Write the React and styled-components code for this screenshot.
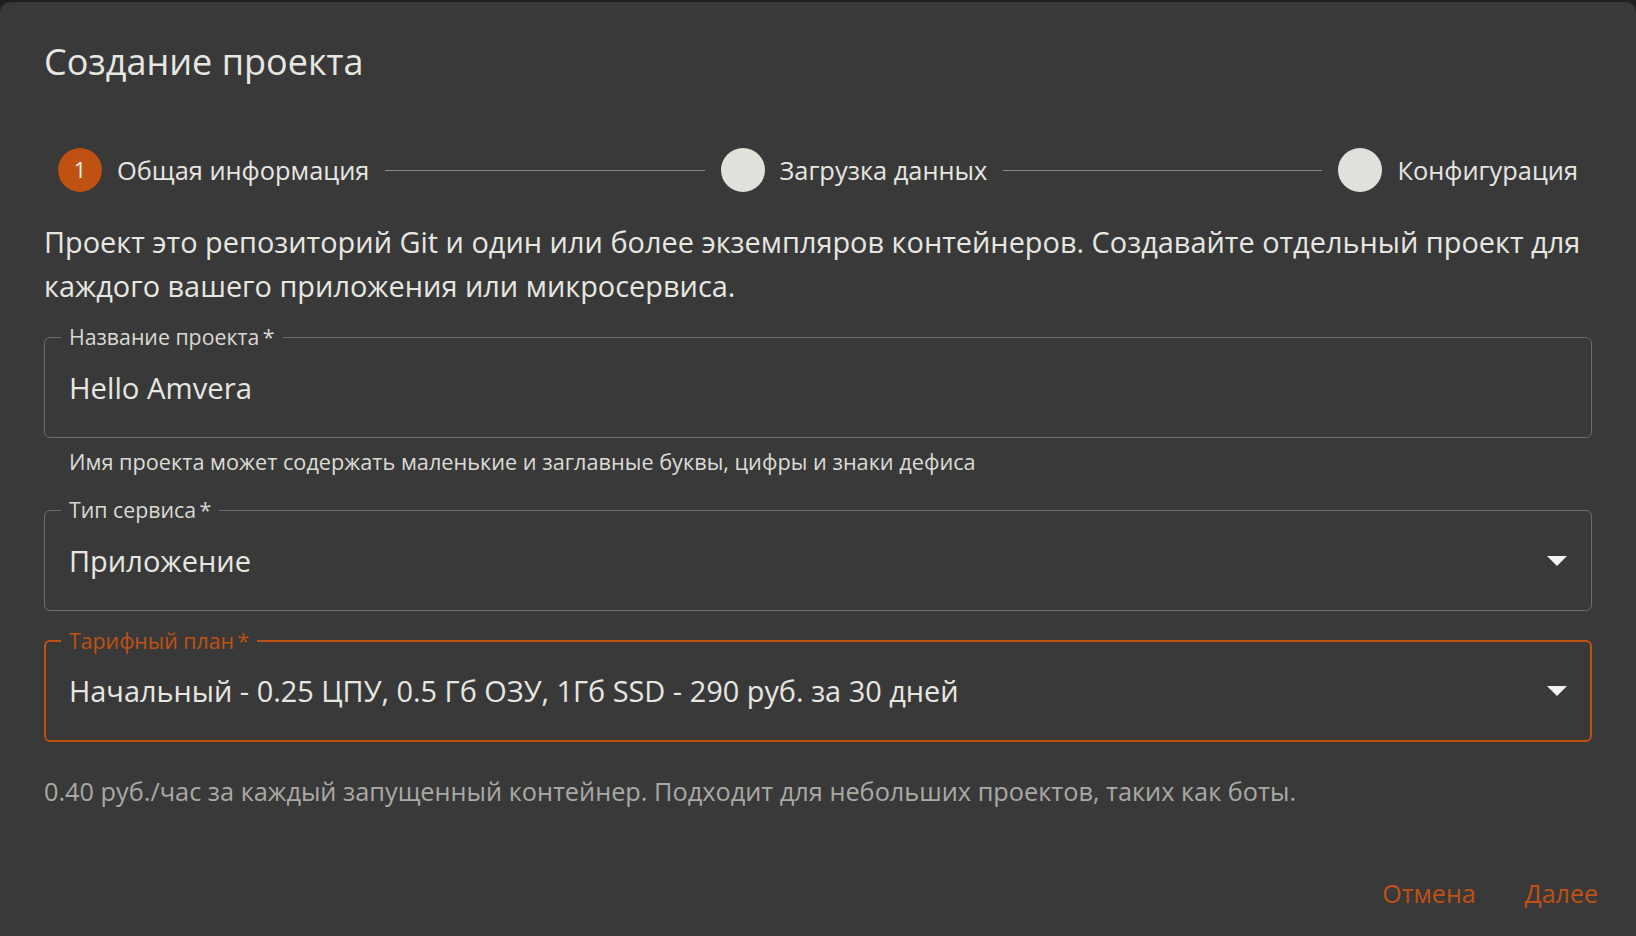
import React from "react";
import styled, { createGlobalStyle } from "styled-components";

const GlobalStyle = createGlobalStyle`
  html, body {
    margin: 0;
    padding: 0;
    background: #1f1f1f;
    font-family: "Open Sans", "Noto Sans", sans-serif;
  }
  * { box-sizing: border-box; }
`;

const ORANGE = "#bf5213";
const TEXT = "#e7e7e1";

const Dialog = styled.div`
  margin-top: 2px;
  height: 934px;
  background: #393939;
  border-radius: 10px 10px 0 0;
  color: ${TEXT};
  display: flex;
  flex-direction: column;
`;

const Content = styled.div`
  padding: 33px 44px 0 44px;
  display: flex;
  flex-direction: column;
`;

const Title = styled.h2`
  margin: 0;
  font-size: 36px;
  line-height: 54px;
  font-weight: 400;
`;

const Stepper = styled.div`
  margin-top: 59px;
  padding: 0 14px;
  display: flex;
  align-items: center;
  height: 44px;
`;

const Step = styled.div`
  display: flex;
  align-items: center;
  gap: 15px;
  flex-shrink: 0;
`;

const StepCircle = styled.div`
  width: 44px;
  height: 44px;
  border-radius: 50%;
  background: ${(p) => (p.$active ? ORANGE : "#e1e1dc")};
  color: ${(p) => (p.$active ? "#f4f4f0" : "#e1e1dc")};
  display: flex;
  align-items: center;
  justify-content: center;
  font-size: 21px;
`;

const StepLabel = styled.span`
  font-size: 25.4px;
  line-height: 36px;
  white-space: nowrap;
`;

const Connector = styled.div`
  flex: 1;
  height: 1px;
  margin: 0 16px;
  background: #8a8a86;
`;

const Intro = styled.p`
  margin: 28px 0 0 0;
  font-size: 28.9px;
  line-height: 44px;
`;

const Field = styled.div`
  position: relative;
  margin-top: ${(p) => p.$mt}px;
  height: ${(p) => (p.$focused ? 102 : 101)}px;
  border: ${(p) => (p.$focused ? `2px solid ${ORANGE}` : "1px solid #6c6c6a")};
  border-radius: 6px;
  display: flex;
  align-items: center;
  justify-content: space-between;
  padding: 0 ${(p) => (p.$focused ? 23 : 24)}px;
`;

const FieldLabel = styled.label`
  position: absolute;
  top: -13px;
  left: ${(p) => (p.$focused ? 15 : 16)}px;
  padding: 0 8px;
  background: #393939;
  font-size: 21.3px;
  line-height: 24px;
  color: ${(p) => (p.$focused ? ORANGE : "#d9d9d4")};
`;

const Value = styled.span`
  font-size: ${(p) => p.$size || 29}px;
  line-height: 40px;
  white-space: nowrap;
`;

const Helper = styled.div`
  margin-top: 9px;
  padding-left: 25px;
  font-size: 21.7px;
  line-height: 30px;
  color: #dcdcd6;
`;

const Note = styled.p`
  margin: 31px 0 0 0;
  font-size: 25.3px;
  line-height: 36px;
  color: #a9a9a5;
`;

const Actions = styled.div`
  margin-top: 66px;
  padding-right: 30px;
  display: flex;
  justify-content: flex-end;
  gap: 33px;
`;

const TextButton = styled.button`
  background: none;
  border: none;
  padding: 0 8px;
  font-family: inherit;
  font-size: 25px;
  line-height: 36px;
  color: ${ORANGE};
  cursor: pointer;
`;

const Arrow = () => (
  <svg width="20" height="10" viewBox="0 0 20 10">
    <polygon points="0,0 20,0 10,10" fill="#f2f2ee" />
  </svg>
);

const steps = ["Общая информация", "Загрузка данных", "Конфигурация"];

export default function App() {
  return (
    <>
      <GlobalStyle />
      <Dialog>
        <Content>
          <Title>Создание проекта</Title>
          <Stepper>
            {steps.map((s, i) => (
              <React.Fragment key={s}>
                {i > 0 && <Connector />}
                <Step>
                  <StepCircle $active={i === 0}>{i + 1}</StepCircle>
                  <StepLabel>{s}</StepLabel>
                </Step>
              </React.Fragment>
            ))}
          </Stepper>
          <Intro>
            Проект это репозиторий Git и один или более экземпляров контейнеров. Создавайте отдельный проект для
            каждого вашего приложения или микросервиса.
          </Intro>

          <Field $mt={29}>
            <FieldLabel>Название проекта{"\u2009"}*</FieldLabel>
            <Value $size={29.3}>Hello Amvera</Value>
          </Field>
          <Helper>Имя проекта может содержать маленькие и заглавные буквы, цифры и знаки дефиса</Helper>

          <Field $mt={33}>
            <FieldLabel>Тип сервиса{"\u2009"}*</FieldLabel>
            <Value>Приложение</Value>
            <Arrow />
          </Field>

          <Field $mt={29} $focused>
            <FieldLabel $focused>Тарифный план{"\u2009"}*</FieldLabel>
            <Value $size={28.9}>Начальный - 0.25 ЦПУ, 0.5 Гб ОЗУ, 1Гб SSD - 290 руб. за 30 дней</Value>
            <Arrow />
          </Field>

          <Note>0.40 руб./час за каждый запущенный контейнер. Подходит для небольших проектов, таких как боты.</Note>
        </Content>
        <Actions>
          <TextButton>Отмена</TextButton>
          <TextButton>Далее</TextButton>
        </Actions>
      </Dialog>
    </>
  );
}
